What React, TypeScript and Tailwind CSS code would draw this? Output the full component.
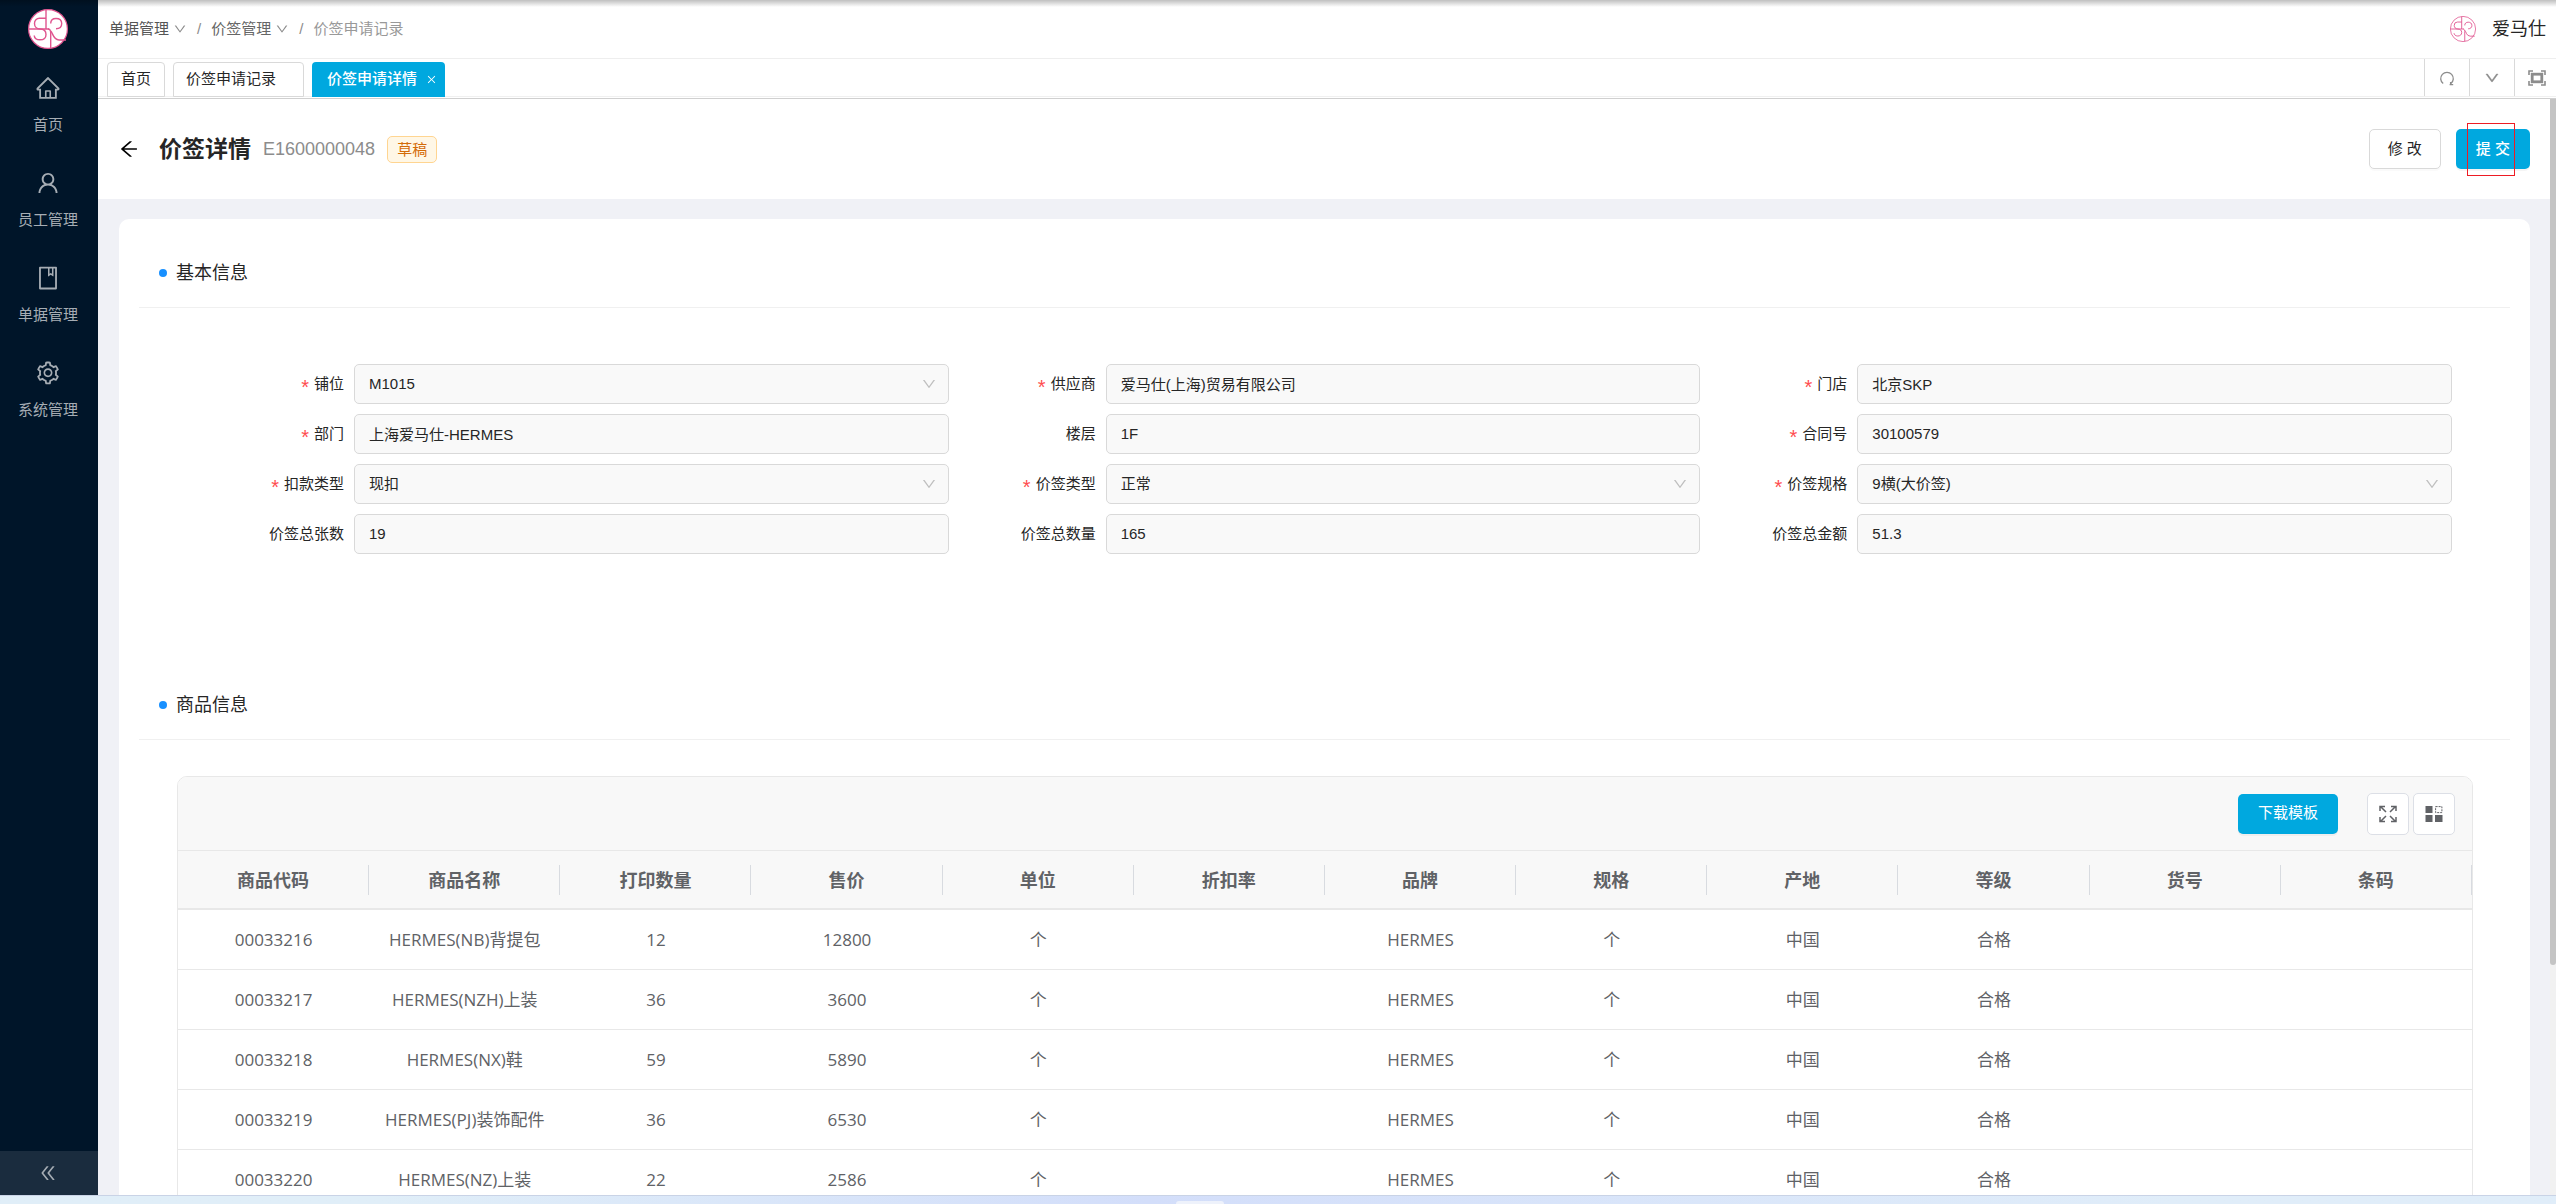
import type { ReactNode } from "react";
import {
  AiOutlineArrowLeft,
  AiOutlineBook,
  AiOutlineClose,
  AiOutlineDoubleLeft,
  AiOutlineDown,
  AiOutlineHome,
  AiOutlineSetting,
  AiOutlineUser,
} from "react-icons/ai";

type Field = {
  id: string;
  label: string;
  value: string;
  required?: boolean;
  select?: boolean;
};

type Goods = {
  code: string;
  name: string;
  qty: string;
  price: string;
};

const menu = [
  { label: "首页", icon: AiOutlineHome },
  { label: "员工管理", icon: AiOutlineUser },
  { label: "单据管理", icon: AiOutlineBook },
  { label: "系统管理", icon: AiOutlineSetting },
];

const fields: Field[] = [
  { id: "booth", label: "铺位", value: "M1015", required: true, select: true },
  { id: "supplier", label: "供应商", value: "爱马仕(上海)贸易有限公司", required: true },
  { id: "store", label: "门店", value: "北京SKP", required: true },
  { id: "dept", label: "部门", value: "上海爱马仕-HERMES", required: true },
  { id: "floor", label: "楼层", value: "1F" },
  { id: "contract", label: "合同号", value: "30100579", required: true },
  { id: "deduct", label: "扣款类型", value: "现扣", required: true, select: true },
  { id: "tagType", label: "价签类型", value: "正常", required: true, select: true },
  { id: "tagSpec", label: "价签规格", value: "9横(大价签)", required: true, select: true },
  { id: "sheets", label: "价签总张数", value: "19" },
  { id: "total", label: "价签总数量", value: "165" },
  { id: "amount", label: "价签总金额", value: "51.3" },
];

const columns = [
  "商品代码",
  "商品名称",
  "打印数量",
  "售价",
  "单位",
  "折扣率",
  "品牌",
  "规格",
  "产地",
  "等级",
  "货号",
  "条码",
];

const goods: Goods[] = [
  { code: "00033216", name: "HERMES(NB)背提包", qty: "12", price: "12800" },
  { code: "00033217", name: "HERMES(NZH)上装", qty: "36", price: "3600" },
  { code: "00033218", name: "HERMES(NX)鞋", qty: "59", price: "5890" },
  { code: "00033219", name: "HERMES(PJ)装饰配件", qty: "36", price: "6530" },
  { code: "00033220", name: "HERMES(NZ)上装", qty: "22", price: "2586" },
];

function Logo({ className }: { className?: string }) {
  return (
    <svg viewBox="0 0 40 40" fill="none" stroke="#e0558f" className={className}>
      <circle cx="20" cy="20" r="19.4" fill="#fff" strokeWidth="1.2" />
      <g strokeWidth="1.4">
        <path d="M18 1v19M1 20h20M22.700 39V24" />
        <path d="M18 9.300h-6.500a5 5 0 0 0-5 5.200c0 3 2 5.500 5.500 5.500M12 20c3.500 0 6 2 6 5.400s-2.500 5.400-6 5.400-5.600-2-5.800-4.300" />
        <path d="M22.700 14.500c0-3.200 2-5 5.300-5s5.700 1.800 5.700 5-2.200 5.200-5.700 5.200" />
        <path d="M22.700 24c0-2.500-1-4-2.700-4M22.700 22c2 1.500 2.500 9 8.300 9h7" />
      </g>
    </svg>
  );
}

function ReloadIcon() {
  return (
    <svg viewBox="0 0 16 16" className="size-4" fill="none" stroke="#8c8c8c" strokeWidth="1.3">
      <path d="M4.200 13.600A6.300 6.300 0 1 1 11.800 13.600" />
      <path d="M10.600 14.700h3.600M11.600 12v2.700" />
    </svg>
  );
}

function FullscreenIcon() {
  return (
    <svg viewBox="0 0 18 16" className="h-4 w-[18px]" fill="none" stroke="#8c8c8c">
      <rect x="4.200" y="4.200" width="9.600" height="7.600" strokeWidth="2.800" />
      <path strokeWidth="1.600" d="M1 5V1h4M13 1h4v4M17 11v4h-4M5 15H1v-4" />
    </svg>
  );
}

function ExpandIcon() {
  return (
    <svg viewBox="0 0 18 18" className="size-[18px]" fill="none" stroke="#606266" strokeWidth="1.500">
      <path d="M1 6V1.500h5M1.500 1.500l5.500 5.500" />
      <path d="M12 1.500h5V6M16.500 1.500L11 7" />
      <path d="M1 12v4.500h5M1.500 16.500L7 11" />
      <path d="M17 12v4.500h-5M16.500 16.500L11 11" />
    </svg>
  );
}

function ColumnsIcon() {
  return (
    <svg viewBox="0 0 18 18" className="size-[18px]" fill="#606266">
      <rect x="0.500" y="1" width="7" height="7" />
      <rect x="0.500" y="10" width="7" height="7" />
      <rect x="10" y="10" width="7.500" height="7" />
      <rect x="10.600" y="1.600" width="6.300" height="6" fill="none" stroke="#606266" strokeDasharray="2 1" />
    </svg>
  );
}

function Sidebar() {
  return (
    <aside className="flex w-[98px] shrink-0 flex-col bg-[#001529] text-[#a6adb4]">
      <div className="flex h-[58px] items-center justify-center pr-0.5">
        <Logo className="size-10" />
      </div>
      <nav className="flex-1 pr-0.5">
        {menu.map(({ label, icon: Icon }) => (
          <a
            key={label}
            href="#"
            className="flex h-[95px] flex-col items-center justify-center gap-3 text-[15px] leading-6"
          >
            <Icon className="size-[26px]" />
            {label}
          </a>
        ))}
      </nav>
      <button aria-label="收起" className="flex h-11 items-center justify-center bg-[#1a2c3e] pr-0.5">
        <AiOutlineDoubleLeft className="size-5" />
      </button>
    </aside>
  );
}

function TopBar() {
  return (
    <header className="flex h-[59px] shrink-0 items-center justify-between border-b border-[#eee] pl-[11px] pr-[10px]">
      <nav className="flex items-center gap-[10px] text-[15px] text-[#8c8c8c]">
        <a href="#" className="flex items-center gap-1 text-[#555]">
          单据管理
          <AiOutlineDown className="size-[14px] text-[#8c8c8c]" />
        </a>
        <span>/</span>
        <a href="#" className="flex items-center gap-1 text-[#666]">
          价签管理
          <AiOutlineDown className="size-[14px] text-[#8c8c8c]" />
        </a>
        <span>/</span>
        <span className="text-[#999]">价签申请记录</span>
      </nav>
      <div className="flex items-center gap-4 text-lg text-[#262626]">
        <Logo className="size-[26px]" />
        爱马仕
      </div>
    </header>
  );
}

function TabBar() {
  return (
    <div className="shrink-0 border-b border-[#d0d0d0] pb-px">
      <div className="flex h-[38px] items-end justify-between border-b border-[#f0f0f0] pl-[9px] text-[15px] text-[#262626]">
        <div className="-mb-px flex gap-2">
          <button className="h-[35px] rounded-t-sm border border-[#d9d9d9] px-[13px]">首页</button>
          <button className="h-[35px] rounded-t-sm border border-[#d9d9d9] pl-3 pr-[27px]">
            价签申请记录
          </button>
          <button className="flex h-[35px] items-center gap-[9px] rounded-t-sm bg-[#00a8df] pl-[15px] pr-2 font-medium text-white">
            价签申请详情
            <AiOutlineClose className="size-[11px]" />
          </button>
        </div>
        <div className="flex h-[37px]">
          <button aria-label="刷新" className="flex w-[45px] items-center justify-center border-l border-[#d9d9d9]">
            <ReloadIcon />
          </button>
          <button aria-label="更多" className="flex w-[45px] items-center justify-center border-l border-[#d9d9d9]">
            <AiOutlineDown className="size-4 stroke-[30] text-[#8c8c8c]" />
          </button>
          <button aria-label="全屏" className="flex w-[42px] items-center justify-center border-l border-[#d9d9d9] pl-[2px]">
            <FullscreenIcon />
          </button>
        </div>
      </div>
    </div>
  );
}

function PageHeader() {
  return (
    <div className="flex h-[100px] items-center bg-white px-5">
      <button aria-label="返回" className="mr-[19px]">
        <AiOutlineArrowLeft className="size-[22px] text-black" />
      </button>
      <h1 className="mr-3 text-[23px] leading-8 font-bold text-[#262626]">价签详情</h1>
      <span className="mr-3 text-lg text-[#8c8c8c]">E1600000048</span>
      <span className="rounded-[5px] border border-[#ffd591] bg-[#fff7e6] px-[9px] text-[15px] leading-[25px] text-[#d46b08]">
        草稿
      </span>
      <div className="ml-auto flex gap-[15px] text-[15px]">
        <button className="h-10 rounded-[5px] border border-[#d9d9d9] px-[18px] text-[#262626] shadow-[0_2px_0_rgba(0,0,0,0.02)]">
          修 改
        </button>
        <div className="relative">
          <button className="h-10 rounded-[5px] bg-[#00a8df] px-5 font-medium text-white shadow-[0_2px_0_rgba(0,0,0,0.04)]">
            提 交
          </button>
          <span className="pointer-events-none absolute -top-[6px] left-[11px] h-[53px] w-12 border border-[#ed1c24]" />
        </div>
      </div>
    </div>
  );
}

function Section({ title, children }: { title: string; children: ReactNode }) {
  return (
    <section>
      <h2 className="flex h-[69px] items-center gap-[9px] border-b border-[#f0f0f0] pl-5 text-lg text-[#262626]">
        <span className="size-2 rounded-full bg-[#1890ff]" />
        {title}
      </h2>
      {children}
    </section>
  );
}

function FormField({ field }: { field: Field }) {
  return (
    <div className="flex items-center">
      <label
        htmlFor={field.id}
        className="flex w-[157px] shrink-0 items-center justify-end gap-[5px] pr-[10px] text-[15px]"
      >
        {field.required && <span className="pt-[6px] text-xl leading-5 text-[#ff4d4f]">*</span>}
        {field.label}
      </label>
      {field.select ? (
        <div className="relative flex-1">
          <select
            id={field.id}
            className="h-10 w-full appearance-none rounded-[5px] border border-[#d9d9d9] bg-[#f9f9f9] px-[14px] text-[15px]"
          >
            <option>{field.value}</option>
          </select>
          <AiOutlineDown className="pointer-events-none absolute top-3 right-3 size-4 text-[#bfbfbf]" />
        </div>
      ) : (
        <input
          id={field.id}
          readOnly
          value={field.value}
          className="h-10 min-w-0 flex-1 rounded-[5px] border border-[#d9d9d9] bg-[#f9f9f9] px-[14px] pb-0.5 text-[15px]"
        />
      )}
    </div>
  );
}

function GoodsTable() {
  return (
    <div className="mt-9 mr-[37px] ml-[38px] overflow-hidden rounded-t-[10px] border border-[#e8e8e8] text-[#606266]">
      <div className="flex h-[74px] items-center justify-end border-b border-[#e8e8e8] bg-[#f8f8f8] pr-[17px]">
        <button className="mr-[29px] h-10 rounded-[5px] bg-[#00a8df] px-5 text-[15px] text-white shadow-[0_2px_0_rgba(0,0,0,0.04)]">
          下载模板
        </button>
        <div className="flex gap-1">
          <button
            aria-label="最大化"
            className="flex size-[42px] items-center justify-center rounded-[5px] border border-[#dcdfe6] bg-white"
          >
            <ExpandIcon />
          </button>
          <button
            aria-label="列设置"
            className="flex size-[42px] items-center justify-center rounded-[5px] border border-[#dcdfe6] bg-white"
          >
            <ColumnsIcon />
          </button>
        </div>
      </div>
      <table className="w-full table-fixed border-separate border-spacing-0 text-center font-['Open_Sans','Noto_Sans_CJK_SC',sans-serif] text-[17px]">
        <thead>
          <tr className="bg-[#f8f8f8] text-lg leading-[30px]">
            {columns.map((c) => (
              <th key={c} className="h-[59px] border-b-2 border-[#e8e8e8] p-0 font-bold">
                <div className="border-r border-[#d8dbe0]">{c}</div>
              </th>
            ))}
          </tr>
        </thead>
        <tbody>
          {goods.map((g) => (
            <tr key={g.code} className="[&>td]:h-[60px] [&>td]:border-b [&>td]:border-[#e8e8e8] [&>td]:p-0">
              <td>{g.code}</td>
              <td>{g.name}</td>
              <td>{g.qty}</td>
              <td>{g.price}</td>
              <td>个</td>
              <td />
              <td>HERMES</td>
              <td>个</td>
              <td>中国</td>
              <td>合格</td>
              <td />
              <td />
            </tr>
          ))}
        </tbody>
      </table>
    </div>
  );
}

export default function App() {
  return (
    <div className="relative flex h-screen flex-col overflow-hidden bg-white font-['Liberation_Sans','Noto_Sans_CJK_SC',sans-serif] text-[#262626]">
      <div className="pointer-events-none absolute inset-x-0 top-0 h-[7px] bg-linear-to-b from-black/25 to-transparent" />
      <div className="flex min-h-0 flex-1">
        <Sidebar />
        <div className="flex min-w-0 flex-1 flex-col">
          <TopBar />
          <TabBar />
          <div className="flex min-h-0 flex-1">
            <main className="min-w-0 flex-1 overflow-hidden bg-[#f0f1f6]">
              <PageHeader />
              <div className="mt-5 mr-5 ml-[21px] rounded-[10px] bg-white p-5">
                <Section title="基本信息">
                  <div className="grid grid-cols-3 gap-y-[10px] px-[58px] pt-14 pb-[117px]">
                    {fields.map((f) => (
                      <FormField key={f.id} field={f} />
                    ))}
                  </div>
                </Section>
                <Section title="商品信息">
                  <GoodsTable />
                </Section>
              </div>
            </main>
            <div className="w-[6px] shrink-0 bg-[#f1f1f1]">
              <div className="h-[79%] rounded-b-sm bg-[#c4c4c4]" />
            </div>
          </div>
        </div>
      </div>
      <div className="flex h-[9px] shrink-0 items-end border-t border-[#c9d3e6] bg-linear-to-r from-[#e0eef8] from-15% via-[#d3defa] via-45% to-[#e0edf9] to-85% pl-[46%]">
        <div className="h-[3px] w-12 rounded-t-sm bg-[#eef2fb]" />
      </div>
    </div>
  );
}
